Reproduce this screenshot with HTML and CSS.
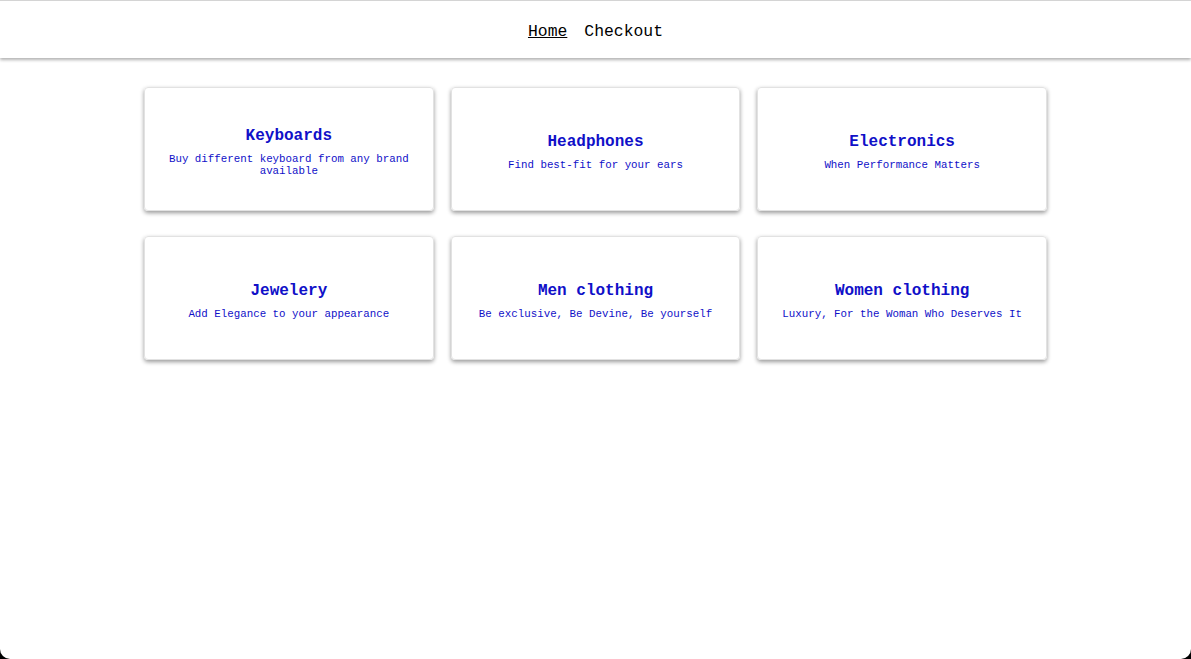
FILE: index.html
```html
<!DOCTYPE html>
<html>
<head>
<meta charset="utf-8">
<link rel="stylesheet" href="styles.css">
</head>
<body>
<header class="header">
  <nav class="nav">
    <a class="nav-link active" href="#">Home</a>
    <a class="nav-link" href="#">Checkout</a>
  </nav>
</header>
<main class="grid">
  <div class="card"><h2 class="card-title">Keyboards</h2><p class="card-desc">Buy different keyboard from any brand available</p></div>
  <div class="card"><h2 class="card-title">Headphones</h2><p class="card-desc">Find best-fit for your ears</p></div>
  <div class="card"><h2 class="card-title">Electronics</h2><p class="card-desc">When Performance Matters</p></div>
  <div class="card"><h2 class="card-title">Jewelery</h2><p class="card-desc">Add Elegance to your appearance</p></div>
  <div class="card"><h2 class="card-title">Men clothing</h2><p class="card-desc">Be exclusive, Be Devine, Be yourself</p></div>
  <div class="card"><h2 class="card-title">Women clothing</h2><p class="card-desc">Luxury, For the Woman Who Deserves It</p></div>
</main>
</body>
</html>
```
FILE: styles.css
```css
html {
  background: #000;
  height: 100%;
}
body {
  margin: 0;
  min-height: 100%;
  background: #fff;
  border-radius: 0 0 10px 10px;
  font-family: "Liberation Mono", "Courier New", monospace;
}
.header {
  height: 58px;
  border-top: 1px solid #d4d4d4;
  box-sizing: border-box;
  box-shadow: 0 2px 3px rgba(0,0,0,0.3);
  display: flex;
  align-items: center;
  justify-content: center;
}
.nav {
  display: flex;
  gap: 17px;
  margin-top: 3px;
}
.nav-link {
  color: #000;
  text-decoration: none;
  font-size: 16.4px;
}
.nav-link.active {
  text-decoration: underline;
}
.grid {
  width: 903px;
  margin: 29px auto 0;
  display: grid;
  grid-template-columns: repeat(3, 1fr);
  column-gap: 17px;
  row-gap: 25px;
}
.card {
  height: 124px;
  box-sizing: border-box;
  border: 1px solid #e2e2e2;
  border-radius: 4px;
  box-shadow: 0 2px 4px rgba(0,0,0,0.4);
  display: flex;
  flex-direction: column;
  align-items: center;
  justify-content: center;
  text-align: center;
  padding: 6px 14px 0;
  color: #1010c8;
}
.card-title {
  margin: 0 0 7px;
  font-size: 16px;
  font-weight: bold;
  line-height: 20px;
}
.card-desc {
  margin: 0 0 2px;
  font-size: 10.8px;
  line-height: 12px;
}
```
